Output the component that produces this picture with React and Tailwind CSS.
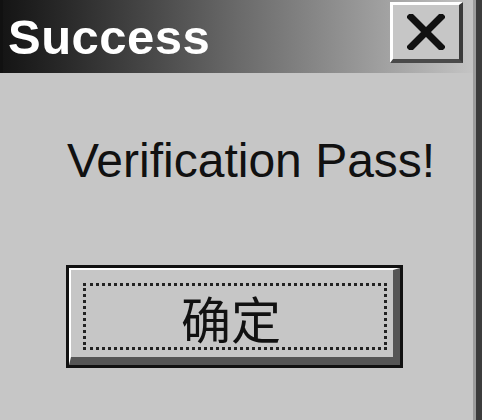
export default function App() {
  return (
    <div className="w-[482px] h-[420px] bg-[#c6c6c6] border-r-[6px] border-r-[#3c3c3c] overflow-hidden">
      <div className="h-full border-r-[3px] border-r-[#9c9c9c] flex flex-col">
        <div className="h-[73px] flex items-center justify-between pl-[5px] pr-[10px] border-l-[3px] border-l-[#111] bg-gradient-to-r from-[#151515] via-[#6a6a6a] to-[#c4c4c4]">
          <span className="text-white font-bold text-[49px] leading-none tracking-[0.5px] mt-[1px]" style={{ fontFamily: '"Liberation Sans", Arial, sans-serif' }}>
            Success
          </span>
          <div className="w-[73px] h-[61px] -mt-[8px] bg-[#c6c6c6] border-t-[3px] border-l-[3px] border-t-white border-l-white border-b-[4px] border-r-[4px] border-b-[#4a4a4a] border-r-[#3a3a3a] flex items-center justify-center">
            <svg width="38" height="36" viewBox="0 0 38 36">
              <path d="M4 3 L34 33 M34 3 L4 33" stroke="#111" strokeWidth="7" strokeLinecap="square" fill="none" />
            </svg>
          </div>
        </div>
        <div className="flex-1 flex flex-col">
          <div className="mt-[64px] ml-[67px] text-[48px] leading-none text-[#111]" style={{ fontFamily: '"Liberation Sans", Arial, sans-serif' }}>
            Verification Pass!
          </div>
          <div className="mt-[80px] ml-[66px] w-[337px] h-[103px] border-[3px] border-[#111] bg-[#c6c6c6]">
            <div className="w-full h-full border-t-[2px] border-l-[2px] border-t-white border-l-white border-b-[8px] border-r-[7px] border-b-[#555] border-r-[#555] pl-[12px] pt-[13px] pr-[6px] pb-[7px]">
              <div className="w-full h-full border-[3px] border-dotted border-[#222] flex items-center justify-center">
                <span className="text-[50px] leading-none text-[#111] -ml-[8px]" style={{ fontFamily: '"Noto Sans CJK SC", sans-serif' }}>
                  确定
                </span>
              </div>
            </div>
          </div>
        </div>
      </div>
    </div>
  );
}
